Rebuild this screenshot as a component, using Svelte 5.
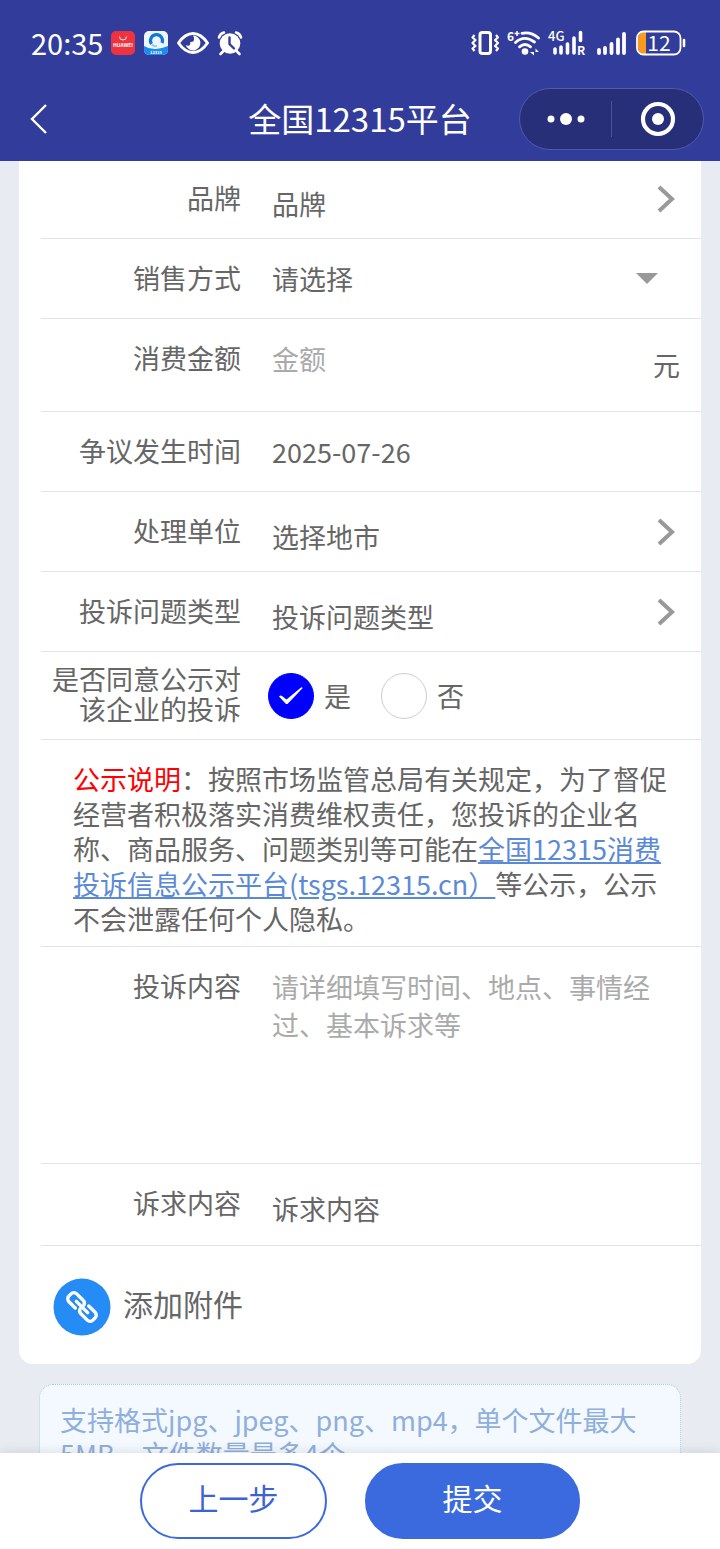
<script>
  const MAX_FILES = 4;

  // Datos del formulario
  let saleMode = '';
  let amount = '';
  let date = '2025-07-26';
  let agree = 'yes';
  let content = '';

  const options = [
    { value: 'yes', text: '是' },
    { value: 'no', text: '否' }
  ];
</script>

<div class="screen">
  <header>
    <div class="status">
      <span class="time">20:35</span>
      <svg width="24" height="24" viewBox="0 0 24 24" aria-hidden="true">
        <rect width="24" height="24" rx="5" fill="#ee3340" />
        <path d="M8.5 5.5a3.500 3.500 0 0 0 7 0" fill="none" stroke="#fff" stroke-width="0.9" />
        <text x="12" y="15.500" text-anchor="middle" font-size="5" font-weight="700" fill="#fff">HUAWEI</text>
      </svg>
      <svg width="26" height="24" viewBox="0 0 26 24" aria-hidden="true">
        <rect x="1" width="24" height="24" rx="5" fill="#eef6fd" />
        <path d="M1 15q6 3.500 12 3t12-3V19a5 5 0 0 1-5 5H6a5 5 0 0 1-5-5z" fill="#1b8ceb" />
        <path d="M8.500 13a6 6 0 1 1 10.500-1" fill="none" stroke="#1277d8" stroke-width="3.200" />
        <path d="M9 13.500a5 5 0 0 0 5 1.500" fill="none" stroke="#8fd0f8" stroke-width="2" />
        <text x="13" y="22.500" text-anchor="middle" font-size="4" font-weight="700" fill="#fff">12315</text>
      </svg>
      <svg width="32" height="24" viewBox="0 0 32 24" aria-hidden="true">
        <path d="M1.500 12Q8 2.500 16 2.500T30.500 12Q24 21.500 16 21.500T1.500 12z" fill="none" stroke="#fff" stroke-width="3" stroke-linejoin="round" />
        <path d="M16 4.500a7.500 7.500 0 1 1-7.300 9.500q2 1.500 3.800.3 1.500-1.300.6-3.300 3.600.6 4-2.200.2-2.600-1.100-4.300z" fill="#fff" />
      </svg>
      <svg width="26" height="26" viewBox="0 0 26 26" aria-hidden="true">
        <circle cx="13" cy="13.500" r="10.300" fill="#fff" />
        <path d="M2 7.500q1-4 5-5M24 7.500q-1-4-5-5M6.500 21l-3 3M19.500 21l3 3" fill="none" stroke="#fff" stroke-width="2.600" stroke-linecap="round" />
        <path d="M12.500 7.500v6.500l4.500 4.500" fill="none" stroke="#323c9b" stroke-width="2.400" stroke-linecap="round" />
      </svg>

      <div class="signals">
        <svg width="28" height="26" viewBox="0 0 28 26" aria-hidden="true" fill="none" stroke="#fff">
          <rect x="9" y="2.500" width="10.500" height="21" rx="2.500" stroke-width="3" />
          <path d="M3.500 5l-2 2.500 3 2.500-3 3 3 3-3 2.500 2 2.500M25 5l2 2.500-3 2.500 3 3-3 3 3 2.500-2 2.500" stroke-width="2.200" stroke-linejoin="round" />
        </svg>
        <svg width="34" height="28" viewBox="0 0 34 28" aria-hidden="true">
          <text x="0" y="12" font-size="12" font-weight="700" fill="#fff">6</text>
          <path d="M7.500 4.500h5M10 2v5" stroke="#fff" stroke-width="1.500" />
          <g fill="none" stroke="#fff" stroke-width="2.800" stroke-linecap="round">
            <path d="M15 4.300Q24 2.500 31.500 9" />
            <path d="M8.500 13.500Q17 5.500 27.500 13" />
            <path d="M12.500 17.800q5.500-4.500 11 0" />
          </g>
          <circle cx="18" cy="22.500" r="3.300" fill="#fff" />
          <path d="M27 19.500v7l-4-3.500h4zM28.500 26.500v-7l3.500 3.500h-3.500z" fill="#fff" />
        </svg>
        <svg width="36" height="28" viewBox="0 0 36 28" aria-hidden="true">
          <text x="-1" y="12" font-size="13" font-weight="500" fill="#fff">4G</text>
          <path d="M6 20v4M12 18v6M18.500 15v9M25 9v15M31.500 3.500v8" stroke="#fff" stroke-width="3.600" stroke-linecap="round" />
          <text x="28" y="25.500" font-size="12" font-weight="700" fill="#fff">R</text>
        </svg>
        <svg width="35" height="28" viewBox="0 0 35 28" aria-hidden="true">
          <path d="M6 21v3M12 19v5M18.500 15v9M25 10.500V24M31 5v19" stroke="#fff" stroke-width="3.800" stroke-linecap="round" />
        </svg>
        <svg width="50" height="26" viewBox="0 0 50 26" aria-hidden="true">
          <path d="M10 2v22H8a6 6 0 0 1-6-6V8a6 6 0 0 1 6-6z" fill="#fb9a1c" />
          <rect x="1" y="1.500" width="43.500" height="23" rx="6.500" fill="none" stroke="#fff" stroke-width="1.800" />
          <path d="M48 10v6" stroke="#fff" stroke-width="2.600" stroke-linecap="round" />
          <text x="23" y="20.500" text-anchor="middle" font-size="21" fill="#fff">12</text>
        </svg>
      </div>
    </div>

    <nav>
      <button class="back" aria-label="返回">
        <svg width="18" height="32" viewBox="0 0 18 32" aria-hidden="true">
          <path d="M16 2L2 16l14 14" fill="none" stroke="#fff" stroke-width="2.400" />
        </svg>
      </button>
      <h1>全国12315平台</h1>
      <div class="capsule">
        <button aria-label="更多">
          <svg width="38" height="14" viewBox="0 0 38 14" fill="#fff" aria-hidden="true">
            <circle cx="4" cy="7" r="3.500" /><circle cx="19" cy="7" r="6" /><circle cx="34" cy="7" r="3.500" />
          </svg>
        </button>
        <span class="split"></span>
        <button aria-label="关闭">
          <svg width="36" height="36" viewBox="0 0 36 36" aria-hidden="true">
            <circle cx="18" cy="18" r="15" fill="none" stroke="#fff" stroke-width="4.200" />
            <circle cx="18" cy="18" r="6" fill="#fff" />
          </svg>
        </button>
      </div>
    </nav>
  </header>

  {#snippet chevron()}
    <svg class="chevron" width="18" height="28" viewBox="0 0 18 28" aria-hidden="true">
      <path d="M2 2l13 12L2 26" fill="none" stroke="#999" stroke-width="4" />
    </svg>
  {/snippet}

  <main>
    <form class="card" id="complaint">
      <div class="row">
        <label for="brand">品牌</label>
        <button type="button" class="field picker" id="brand"><span>品牌</span>{@render chevron()}</button>
      </div>

      <div class="row">
        <label for="mode">销售方式</label>
        <div class="field select">
          <select id="mode" bind:value={saleMode}>
            <option value="">请选择</option>
            <option value="online">网购</option>
            <option value="offline">现场购物</option>
          </select>
          <svg width="22" height="12" viewBox="0 0 22 12" aria-hidden="true"><path d="M0 0h22L11 11z" fill="#999" /></svg>
        </div>
      </div>

      <div class="row amount">
        <label for="amount">消费金额</label>
        <div class="field">
          <input id="amount" type="text" placeholder="金额" bind:value={amount} />
          <span class="unit">元</span>
        </div>
      </div>

      <div class="row">
        <label for="date">争议发生时间</label>
        <div class="field"><input id="date" type="text" bind:value={date} /></div>
      </div>

      <div class="row">
        <label for="city">处理单位</label>
        <button type="button" class="field picker" id="city"><span>选择地市</span>{@render chevron()}</button>
      </div>

      <div class="row">
        <label for="kind">投诉问题类型</label>
        <button type="button" class="field picker" id="kind"><span>投诉问题类型</span>{@render chevron()}</button>
      </div>

      <div class="row agree">
        <span class="caption" id="agree">是否同意公示对该企业的投诉</span>
        <div class="radios" role="radiogroup" aria-labelledby="agree">
          {#each options as option}
            <label>
              <span class="radio">
                <input type="radio" name="agree" value={option.value} bind:group={agree} />
                {#if agree === option.value}
                  <svg width="24" height="18" viewBox="0 0 24 18" aria-hidden="true">
                    <path d="M0 9.500q1.500-1.500 3-.5l4.500 3.500L22 .5q1.500-.5 1.500.8L8.500 17 7 17z" fill="#fff" />
                  </svg>
                {/if}
              </span>
              {option.text}
            </label>
          {/each}
        </div>
      </div>

      <p class="notice">
        <strong>公示说明</strong>：按照市场监管总局有关规定，为了督促经营者积极落实消费维权责任，您投诉的企业名称、商品服务、问题类别等可能在<a href="#tsgs">全国12315消费投诉信息公示平台(tsgs.12315.cn）</a>等公示，公示不会泄露任何个人隐私。
      </p>

      <div class="row content">
        <label for="content">投诉内容</label>
        <textarea id="content" placeholder="请详细填写时间、地点、事情经过、基本诉求等" bind:value={content}></textarea>
      </div>

      <div class="row appeal">
        <label for="appeal">诉求内容</label>
        <button type="button" class="field picker" id="appeal"><span>诉求内容</span></button>
      </div>

      <button type="button" class="attach">
        <svg width="58" height="58" viewBox="0 0 58 58" aria-hidden="true">
          <circle cx="29" cy="29" r="28.500" fill="#258bf5" />
          <g transform="translate(29 29) rotate(45)" fill="none" stroke="#fff" stroke-width="3.400" stroke-linecap="round">
            <path d="M-4 5.500h-9a4 4 0 0 1-4-4v-3a4 4 0 0 1 4-4h9a4 4 0 0 1 4 3" />
            <path d="M4-5.500h9a4 4 0 0 1 4 4v3a4 4 0 0 1-4 4H4a4 4 0 0 1-4-3" />
            <path d="M-8 0H8" />
          </g>
        </svg>
        <span>添加附件</span>
      </button>
    </form>

    <p class="tip">支持格式jpg、jpeg、png、mp4，单个文件最大5MB，文件数量最多{MAX_FILES}个</p>
  </main>

  <footer>
    <button type="button" class="prev">上一步</button>
    <button type="submit" class="submit" form="complaint">提交</button>
  </footer>
</div>

<style>
  :global(body) {
    background: #e8ebf1;
  }

  .screen {
    display: flex;
    flex-direction: column;
    height: 100vh;
    overflow: hidden;
    font-family: 'Noto Sans CJK SC', sans-serif;
    font-size: 27px;
    line-height: 36px;
    color: #666;
  }

  .screen * {
    box-sizing: border-box;
  }

  button,
  input,
  select,
  textarea {
    margin: 0;
    padding: 0;
    border: 0;
    background: none;
    font: inherit;
    color: inherit;
    text-align: left;
    appearance: none;
    outline: none;
  }

  svg {
    display: block;
    flex: none;
    overflow: visible;
  }

  header {
    flex: none;
    background: #323c9b;
    color: #fff;
  }

  .status {
    display: flex;
    align-items: center;
    gap: 8px;
    height: 76px;
    padding: 10px 34px 0 31px;
  }

  .time {
    padding-bottom: 2px;
    font-size: 29px;
  }

  .signals {
    display: flex;
    align-items: center;
    gap: 8px;
    margin-left: auto;
  }

  nav {
    display: grid;
    grid-template-columns: minmax(0, 1fr) auto minmax(0, 1fr);
    align-items: center;
    height: 85px;
    padding: 0 16px;
  }

  .back {
    justify-self: start;
    padding: 0 14px;
  }

  h1 {
    margin: 0;
    padding-bottom: 2px;
    font-size: 33px;
    font-weight: 400;
  }

  .capsule {
    display: flex;
    align-items: center;
    justify-self: end;
    width: 185px;
    height: 62px;
    border: 1px solid #5259a8;
    border-radius: 31px;
    background: #272f79;
  }

  .capsule button {
    flex: 1;
    display: flex;
    justify-content: center;
  }

  .split {
    width: 1px;
    height: 36px;
    background: #4d549b;
  }

  main {
    flex: 1;
    min-height: 0;
    overflow: auto;
    scrollbar-width: none;
  }

  .card {
    margin: -2px 19px 20px;
    padding-left: 22px;
    border-radius: 0 0 14px 14px;
    background: #fff;
  }

  .row {
    display: grid;
    grid-template-columns: 200px minmax(0, 1fr);
    column-gap: 31px;
    min-height: 80px;
    border-bottom: 1px solid #e3e3e3;
  }

  .row > label {
    padding-top: 21px;
    text-align: right;
  }

  .field {
    display: flex;
    align-items: center;
    height: 79px;
    padding-right: 21px;
  }

  .field input,
  .field select {
    flex: 1;
    min-width: 0;
    height: 36px;
  }

  .picker {
    justify-content: space-between;
    padding-right: 26px;
  }

  .picker span {
    padding-top: 10px;
  }

  .select {
    padding-right: 43px;
  }

  .amount {
    min-height: 93px;
  }

  .unit {
    padding-top: 12px;
  }

  input::placeholder,
  textarea::placeholder {
    color: #aaa;
    opacity: 1;
  }

  .agree {
    column-gap: 27px;
    align-items: center;
    min-height: 88px;
  }

  .caption {
    padding: 0 0 4px 11px;
    line-height: 30px;
    text-align: right;
  }

  .radios,
  .radios label {
    display: flex;
    align-items: center;
  }

  .radios {
    gap: 30px;
  }

  .radios label {
    gap: 10px;
  }

  .radio {
    display: grid;
    place-items: center;
  }

  .radio > :global(*) {
    grid-area: 1 / 1;
  }

  .radio input {
    width: 46px;
    height: 46px;
    border: 1px solid #ccc;
    border-radius: 50%;
  }

  .radio input:checked {
    border-color: #00f;
    background: #00f;
  }

  .radio svg {
    pointer-events: none;
    z-index: 1;
  }

  .notice {
    min-height: 207px;
    margin: 0;
    padding: 21px 30px 10px 32px;
    border-bottom: 1px solid #e3e3e3;
    line-height: 35px;
  }

  .notice strong {
    font-weight: 400;
    color: #f00;
  }

  .notice a {
    color: #5a8ad6;
  }

  .content {
    min-height: 217px;
  }

  .content textarea {
    height: 200px;
    margin-right: 21px;
    padding-top: 21px;
    line-height: 38px;
    resize: none;
  }

  .appeal {
    min-height: 82px;
  }

  .attach {
    display: flex;
    align-items: center;
    gap: 12px;
    width: 100%;
    height: 118px;
    padding: 4px 0 0 12px;
    font-size: 30px;
  }

  .attach span {
    padding-bottom: 8px;
  }

  .tip {
    margin: 0 39px;
    padding: 18px 20px;
    border: 1px dotted #a9c6ee;
    border-radius: 14px;
    background: #f4f8ff;
    line-height: 34px;
    color: #8fafdc;
  }

  footer {
    z-index: 1;
    flex: none;
    display: flex;
    justify-content: center;
    gap: 38px;
    padding: 10px 0;
    background: #fff;
    box-shadow: 0 0 12px rgba(0, 0, 0, 0.12);
  }

  footer button {
    height: 76px;
    padding-bottom: 8px;
    border: 2px solid #3b6adf;
    border-radius: 38px;
    font-size: 30px;
    text-align: center;
  }

  .prev {
    width: 187px;
    color: #3b63d2;
  }

  .submit {
    width: 215px;
    background: #3b6adf;
    color: #fff;
  }
</style>
